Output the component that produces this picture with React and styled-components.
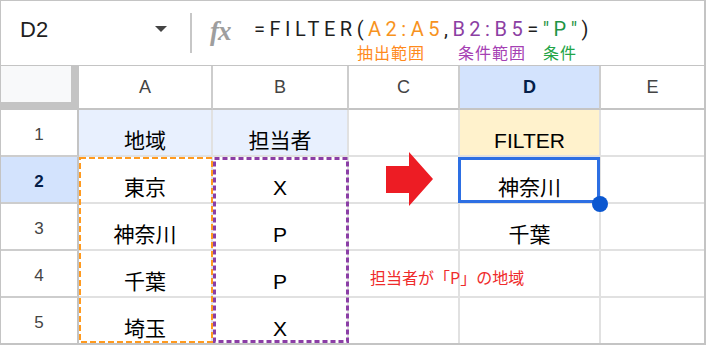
import React from 'react';
import styled, { createGlobalStyle } from 'styled-components';

const GlobalStyle = createGlobalStyle`
  html, body {
    margin: 0;
    padding: 0;
    background: #fff;
  }
  body {
    font-family: "Liberation Sans", "Noto Sans CJK JP", Arial, sans-serif;
  }
`;

const Frame = styled.div`
  width: 706px;
  height: 345px;
  box-sizing: border-box;
  border: 1px solid #c4c4c4;
  border-right-width: 2px;
  border-bottom-width: 2px;
  display: flex;
  flex-direction: column;
  overflow: hidden;
`;

const FormulaBar = styled.div`
  height: 65px;
  flex-shrink: 0;
  box-sizing: border-box;
  border-bottom: 1px solid #c4c4c4;
  display: flex;
  align-items: flex-start;
`;

const NameBox = styled.div`
  width: 189px;
  box-sizing: border-box;
  padding: 16px 23px 0 19px;
  display: flex;
  justify-content: space-between;
  align-items: center;
  font-size: 22px;
  line-height: 26px;
  color: #1f1f1f;
`;

const Caret = styled.span`
  width: 0;
  height: 0;
  border-left: 6px solid transparent;
  border-right: 6px solid transparent;
  border-top: 6px solid #444;
  margin-top: -2px;
`;

const Divider = styled.div`
  width: 2px;
  height: 40px;
  margin-top: 12px;
  background: #c7c7c7;
`;

const FxIcon = styled.span`
  margin: 16px 0 0 18px;
  width: 32px;
  font-family: "Liberation Serif", serif;
  font-style: italic;
  font-weight: bold;
  font-size: 27px;
  line-height: 28px;
  color: #9e9e9e;
  letter-spacing: -1px;
`;

const FormulaArea = styled.div`
  margin-left: 12px;
  padding-top: 17px;
  display: flex;
  flex-direction: column;
`;

const FormulaText = styled.div`
  font-family: Roboto, "Liberation Sans", sans-serif;
  font-size: 20px;
  line-height: 22px;
  letter-spacing: 4.5px;
  color: #1f1f1f;
  white-space: nowrap;
`;

const Part = styled.span`
  color: ${p => p.$color};
`;

const LabelRow = styled.div`
  display: flex;
  padding: 2px 0 0 103px;
  font-family: "Noto Sans CJK JP", sans-serif;
  font-size: 16px;
  line-height: 20px;
  letter-spacing: 1px;
`;

const Label = styled.span`
  color: ${p => p.$color};
  margin-left: ${p => p.$gap || 0}px;
`;

const Sheet = styled.div`
  flex: 1;
  display: grid;
  grid-template-columns: 78px 134px 136px 111px 141px 1fr;
  grid-template-rows: 44px repeat(4, 47px) 1fr;
`;

const Corner = styled.div`
  grid-row: 1;
  grid-column: 1;
  background: #f8f9fa;
  border-right: 8px solid #c4c4c4;
  border-bottom: 8px solid #c4c4c4;
`;

const ColHead = styled.div`
  grid-row: 1;
  grid-column: ${p => p.$c};
  display: flex;
  align-items: center;
  justify-content: center;
  border-bottom: 2px solid #c4c4c4;
  border-right: ${p => (p.$last ? 'none' : '2px solid #cdcdcd')};
  background: ${p => (p.$active ? '#d3e3fd' : '#fff')};
  color: ${p => (p.$active ? '#041e49' : '#444')};
  font-weight: ${p => (p.$active ? 'bold' : 'normal')};
  font-size: 18px;
`;

const RowHead = styled.div`
  grid-row: ${p => p.$r};
  grid-column: 1;
  display: flex;
  align-items: center;
  justify-content: center;
  padding-top: 4px;
  border-right: 2px solid #c4c4c4;
  border-bottom: ${p => (p.$last ? 'none' : '2px solid #cdcdcd')};
  background: ${p => (p.$active ? '#d3e3fd' : '#fff')};
  color: ${p => (p.$active ? '#041e49' : '#444')};
  font-weight: ${p => (p.$active ? 'bold' : 'normal')};
  font-size: 17px;
`;

const Cell = styled.div`
  grid-row: ${p => p.$r};
  grid-column: ${p => p.$c};
  display: flex;
  justify-content: ${p => (p.$left ? 'flex-start' : 'center')};
  align-items: flex-end;
  padding-bottom: 1px;
  min-width: 0;
  border-right: ${p => (p.$lastCol ? 'none' : '2px solid #e1e1e1')};
  border-bottom: ${p => (p.$lastRow ? 'none' : '2px solid #e1e1e1')};
  background: ${p => p.$bg || 'transparent'};
  color: #000;
  font-size: 21px;
  line-height: 26px;
  white-space: nowrap;
`;

const Note = styled.span`
  align-self: center;
  margin: 8px 0 0 21px;
  position: relative;
  z-index: 3;
  font-family: "Noto Sans CJK JP", sans-serif;
  font-size: 16px;
  line-height: 20px;
  color: #ef2b2b;
`;

const RangeBox = styled.div`
  grid-column: ${p => p.$c};
  grid-row: 3 / 7;
  position: relative;
  z-index: 2;
  pointer-events: none;

  svg {
    position: absolute;
    inset: 0;
    width: 100%;
    height: 100%;
    overflow: visible;
  }

  rect {
    x: ${p => p.$w / 2}px;
    y: ${p => p.$w / 2}px;
    width: calc(100% - ${p => p.$w}px);
    height: calc(100% - ${p => p.$w}px);
    fill: none;
    stroke: ${p => p.$color};
    stroke-width: ${p => p.$w}px;
    stroke-dasharray: ${p => p.$dash};
  }
`;

const Selection = styled.div`
  grid-column: 5;
  grid-row: 3;
  margin: 0 1px 1px -2px;
  border: 3px solid #2d6fe3;
  position: relative;
  z-index: 4;
  pointer-events: none;
`;

const Handle = styled.span`
  position: absolute;
  right: -11px;
  bottom: -12px;
  width: 16px;
  height: 16px;
  border-radius: 50%;
  background: #0b57d0;
`;

const ArrowSlot = styled.div`
  grid-column: 4;
  grid-row: 3;
  display: flex;
  align-items: center;
  justify-content: center;
  position: relative;
  z-index: 3;

  svg {
    flex-shrink: 0;
    margin: -3px 0 0 10px;
  }
`;

const columns = ['A', 'B', 'C', 'D', 'E'];

const rows = [
  [{ t: '地域', bg: '#e8f0fe' }, { t: '担当者', bg: '#e8f0fe' }, {}, { t: 'FILTER', bg: '#fff2cc' }, {}],
  [{ t: '東京' }, { t: 'X' }, {}, { t: '神奈川' }, {}],
  [{ t: '神奈川' }, { t: 'P' }, {}, { t: '千葉' }, {}],
  [{ t: '千葉' }, { t: 'P' }, { note: '担当者が「P」の地域' }, {}, {}],
  [{ t: '埼玉' }, { t: 'X' }, {}, {}, {}],
];

const RedArrow = () => (
  <svg width="47" height="54" viewBox="0 0 47 54">
    <path d="M0 14H23V0L47 27L23 54V41H0Z" fill="#ed1c24" />
  </svg>
);

export default function App() {
  return (
    <>
      <GlobalStyle />
      <Frame>
        <FormulaBar>
          <NameBox>
            D2
            <Caret />
          </NameBox>
          <Divider />
          <FxIcon>fx</FxIcon>
          <FormulaArea>
            <FormulaText>
              =FILTER(<Part $color="#f7931e">A2:A5</Part>,<Part $color="#8c3fa3">B2:B5</Part>=<Part $color="#1f9445">"P"</Part>)
            </FormulaText>
            <LabelRow>
              <Label $color="#ff8a1c">抽出範囲</Label>
              <Label $color="#a540b3" $gap={33}>条件範囲</Label>
              <Label $color="#22a446" $gap={17}>条件</Label>
            </LabelRow>
          </FormulaArea>
        </FormulaBar>

        <Sheet>
          <Corner />
          {columns.map((c, i) => (
            <ColHead key={c} $c={i + 2} $active={c === 'D'} $last={i === columns.length - 1}>
              {c}
            </ColHead>
          ))}
          {rows.map((row, r) => (
            <React.Fragment key={r}>
              <RowHead $r={r + 2} $active={r === 1} $last={r === rows.length - 1}>
                {r + 1}
              </RowHead>
              {row.map((cell, c) => (
                <Cell
                  key={c}
                  $r={r + 2}
                  $c={c + 2}
                  $bg={cell.bg}
                  $left={!!cell.note}
                  $lastCol={c === row.length - 1}
                  $lastRow={r === rows.length - 1}
                >
                  {cell.t}
                  {cell.note && <Note>{cell.note}</Note>}
                </Cell>
              ))}
            </React.Fragment>
          ))}

          <RangeBox $c={2} $color="#ff9a1f" $w={2} $dash="6 3">
            <svg><rect /></svg>
          </RangeBox>
          <RangeBox $c={3} $color="#8b3ea6" $w={3} $dash="5 3">
            <svg><rect /></svg>
          </RangeBox>
          <ArrowSlot>
            <RedArrow />
          </ArrowSlot>
          <Selection>
            <Handle />
          </Selection>
        </Sheet>
      </Frame>
    </>
  );
}
